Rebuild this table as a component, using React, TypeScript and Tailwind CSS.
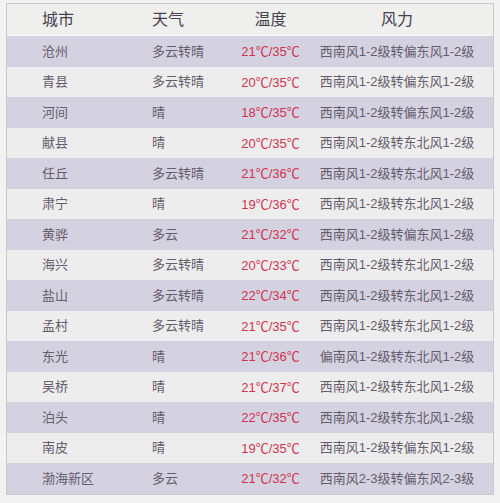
const rows: [string, string, string, string][] = [
  ["沧州", "多云转晴", "21℃/35℃", "西南风1-2级转偏东风1-2级"],
  ["青县", "多云转晴", "20℃/35℃", "西南风1-2级转偏东风1-2级"],
  ["河间", "晴", "18℃/35℃", "西南风1-2级转偏东风1-2级"],
  ["献县", "晴", "20℃/35℃", "西南风1-2级转东北风1-2级"],
  ["任丘", "多云转晴", "21℃/36℃", "西南风1-2级转东北风1-2级"],
  ["肃宁", "晴", "19℃/36℃", "西南风1-2级转东北风1-2级"],
  ["黄骅", "多云", "21℃/32℃", "西南风1-2级转偏东风1-2级"],
  ["海兴", "多云转晴", "20℃/33℃", "西南风1-2级转东北风1-2级"],
  ["盐山", "多云转晴", "22℃/34℃", "西南风1-2级转东北风1-2级"],
  ["孟村", "多云转晴", "21℃/35℃", "西南风1-2级转东北风1-2级"],
  ["东光", "晴", "21℃/36℃", "偏南风1-2级转东北风1-2级"],
  ["吴桥", "晴", "21℃/37℃", "西南风1-2级转东北风1-2级"],
  ["泊头", "晴", "22℃/35℃", "西南风1-2级转东北风1-2级"],
  ["南皮", "晴", "19℃/35℃", "西南风1-2级转偏东风1-2级"],
  ["渤海新区", "多云", "21℃/32℃", "西南风2-3级转偏东风2-3级"],
];

const font = { fontFamily: '"Liberation Sans", "Noto Sans CJK SC", sans-serif' };
const cjk = { fontFamily: '"Noto Sans CJK SC", sans-serif' };

// split "21℃/35℃" so the degree sign uses the wide CJK glyph
function Temp({ value }: { value: string }) {
  const parts = value.split("℃");
  return (
    <>
      {parts.map((p, i) => (
        <span key={i}>
          {p}
          {i < parts.length - 1 && <span style={cjk}>℃</span>}
        </span>
      ))}
    </>
  );
}

export default function App() {
  return (
    <div className="w-[500px] h-[503px] bg-[#f2f2f2] pt-[3px] pl-[6px]" style={font}>
      <div className="w-[488px] border border-[#c9c9cb] bg-[#efefee]">
        <div className="grid grid-cols-[113px_105px_91px_162px] h-[32px] items-center text-[16px] text-[#47414f] border-b border-[#f8f8f8]">
          <div className="pl-[35px]">城市</div>
          <div className="pl-[32px]">天气</div>
          <div className="text-center">温度</div>
          <div className="text-center">风力</div>
        </div>
        {rows.map((r, i) => (
          <div
            key={r[0]}
            className={
              "grid grid-cols-[113px_105px_91px_162px] h-[30.5px] items-center text-[13px] " +
              (i % 2 === 0 ? "bg-[#d4d1e0]" : "bg-[#eeedee]")
            }
          >
            <div className="pl-[35px] text-[#645d6c]">{r[0]}</div>
            <div className="pl-[32px] text-[#645d6c]">{r[1]}</div>
            <div className="text-center text-[#d0334f] whitespace-nowrap">
              <Temp value={r[2]} />
            </div>
            <div className="text-center text-[#645d6c] whitespace-nowrap">{r[3]}</div>
          </div>
        ))}
      </div>
    </div>
  );
}
